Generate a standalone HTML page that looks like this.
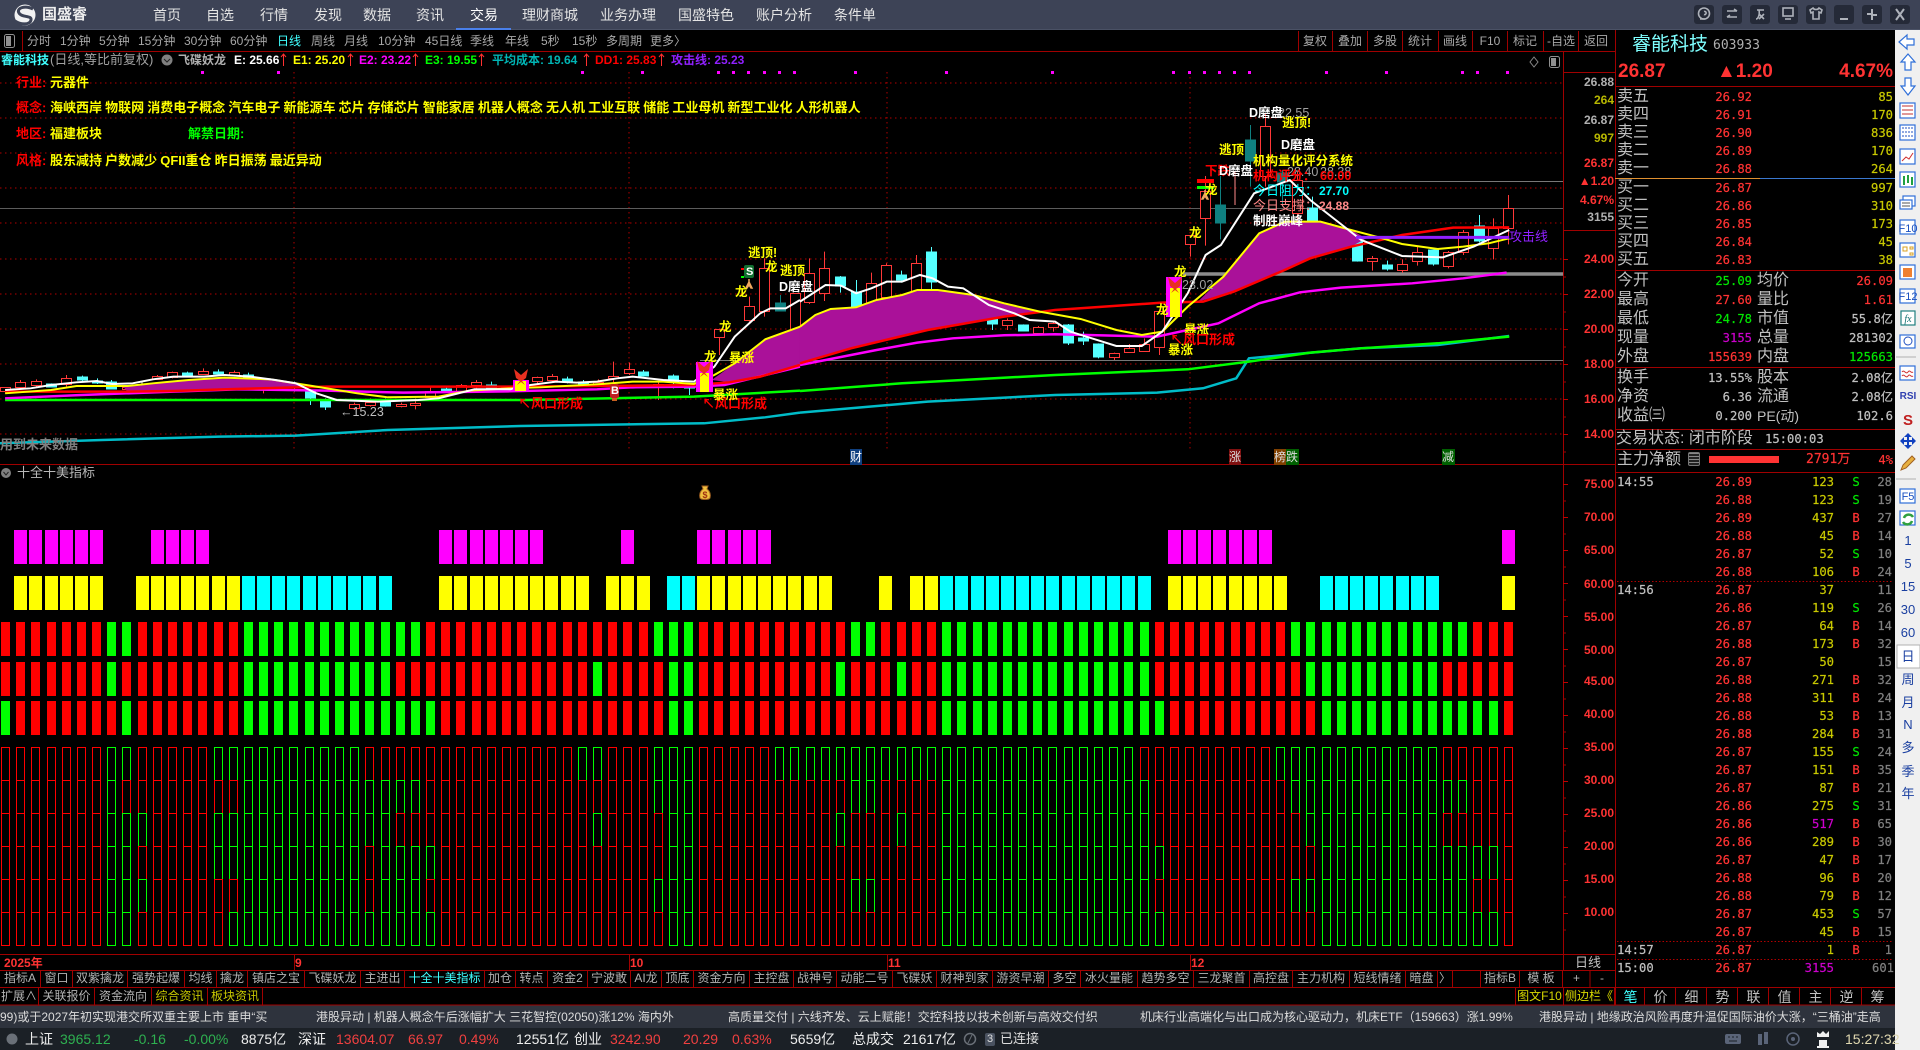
<!DOCTYPE html>
<html lang="zh"><head><meta charset="utf-8"><title>国盛睿</title>
<style>
*{box-sizing:border-box}
html,body{margin:0;padding:0;background:#000}
#r{position:relative;width:1920px;height:1050px;overflow:hidden;background:#000;font:12px/16px "Liberation Sans","Noto Sans CJK SC",sans-serif;color:#b4b4b4}
#r span{position:absolute;white-space:nowrap}
svg#m{position:absolute;left:0;top:0;width:1920px;height:1050px}
.bg{position:absolute}
.n{vector-effect:non-scaling-stroke;fill:none}
.mn{font-size:14px;color:#e4e4e4;top:7px}
.tb{top:33px;color:#a8a8a8}
.tr{top:33px;color:#a8a8a8;width:34px;text-align:center}
.k{font-weight:bold;font-size:12px;top:52px}
.y,.w,.d,.o{font-weight:bold;font-size:12.5px}
.y{color:#ff0}.w{color:#fff}.d{color:#f00}.o{color:#a0a0a0;font-weight:normal}
.c{font-size:13px;font-weight:bold;color:#ff0;word-spacing:-.5px}
.ax{right:306px;font-weight:bold;color:#ff3333;text-align:right}
.ag{right:306px;color:#b0b0b0;font-weight:bold;text-align:right}
.ay{right:306px;color:#b8b800;font-weight:bold;text-align:right}
.l{left:1617px;font-size:16px;line-height:18px;color:#c0c0c0}
.l2{left:1757px;font-size:16px;line-height:18px;color:#c0c0c0}
.p,.q{font:12.2px/18px "DejaVu Sans Mono","Noto Sans CJK SC",monospace;text-align:right;-webkit-text-stroke:.2px}
.p{right:168px}.q{right:27px}
.r{color:#ff3333}.g{color:#00e600}.v{color:#c8c800}.h{color:#c0c0c0}.u{color:#cc00cc}
.cell{height:18px;line-height:17px;text-align:center;border-right:1px solid #a00000;color:#b4b4b4}
.r1{top:970px}.r2{top:988px}
#tk{position:absolute;left:1617px;top:473px;border-collapse:collapse;table-layout:fixed;width:275px;font:12.2px/18px "DejaVu Sans Mono",monospace;-webkit-text-stroke:.2px}
#tk td{padding:0;height:18px;text-align:right;color:#ff3333}
#tk td:nth-child(1){text-align:left;color:#c0c0c0;width:83px}
#tk td:nth-child(2){width:52px}
#tk td:nth-child(3){width:82px;color:#c8c800;padding-right:0}
#tk td:nth-child(4){width:38px;text-align:center;padding-left:6px}
#tk td:nth-child(5){color:#808080}
#tk td.s{color:#00e600}
#tk td.pp{color:#cc00cc}
.tf{top:989px;width:31px;text-align:center;font-size:14px;color:#c0c0c0}
.tc{top:1009px;color:#dcdcdc;font-size:12px}
.s1{top:1031px;font-size:14px}
.sb{left:1896px;width:24px;text-align:center;color:#1a3fa0;font-size:13px}
</style></head><body><div id="r">
<div class="bg" style="left:0;top:0;width:1920px;height:30px;background:#3d4356;border-bottom:1px solid #4a5165"></div>
<div class="bg" style="left:456px;top:28px;width:55px;height:2px;background:#4a80ea"></div>
<div class="bg" style="left:1895px;top:30px;width:25px;height:1020px;background:#f0f0f0"></div>
<div class="bg" style="left:0;top:1005px;width:1895px;height:23px;background:#2e333d"></div>
<div class="bg" style="left:0;top:1028px;width:1895px;height:22px;background:#1b2026"></div>
<div class="bg" style="left:1709px;top:456px;width:70px;height:7px;background:#ff3333"></div>

<svg id="m" viewBox="0 0 1920 1050" xmlns="http://www.w3.org/2000/svg">
<g id="grid" stroke="#b00000" stroke-dasharray="1.5 3.5" fill="none">
<path d="M0 83H1563M0 118H1563M0 153H1563M0 188H1563M0 223H1563M0 259H1563M0 294H1563M0 329H1563M0 364H1563M0 399H1563M0 434H1563"/>
<path d="M294 72V450M629 72V450M887 72V450M1190 72V450"/>
</g>
<g stroke="#8c8c8c" fill="none">
<path d="M0 208.5H1563" stroke="#5c5c5c"/>
<path d="M1285 181.5H1563" stroke="#787878"/>
<path d="M700 360.5H1563" stroke="#787878"/>
<path d="M1183 274H1563" stroke-width="3.5"/>
</g>
<g id="c1"></g>
<!-- filled hump regions -->
<g fill="#aa1199">
<polygon transform="translate(0 180) scale(.5102 .3333)" points="240,618 300,610 370,600 440,593 530,598 630,622 460,627 340,633 250,635"/>
<polygon transform="translate(0 180) scale(.5102 .3333)" points="1395,600 1440,550 1500,478 1568,440 1568,555 1490,590 1430,607"/>
<polygon transform="translate(800 100) scale(.5102 .3333)" points="0,680 30,645 60,627 110,622 150,600 200,585 230,570 270,570 340,585 400,610 470,635 400,650 250,690 100,745 0,790"/>
<polygon transform="translate(800 100) scale(.5102 .3333)" points="780,605 830,530 900,400 950,365 1020,365 1080,390 1110,415 1080,440 1000,475 950,510 850,575"/>
</g>
<g id="c2"></g>
<g transform="translate(0 180) scale(.5102 .3333)">
<polyline class="n" stroke="#00bcc8" stroke-width="2.5" points="0,790 200,780 430,770 580,767 760,750 1020,738 1380,730 1500,712 1568,698"/>
<polyline class="n" stroke="#00ff00" stroke-width="2.5" points="10,660 640,660 1030,660 1360,650 1568,632"/>
<polyline class="n" stroke="#ff00ff" stroke-width="2.5" points="10,655 160,645 340,635 470,628 640,632 790,638 1000,634 1170,628 1240,622 1360,620 1420,615 1460,600 1568,560"/>
<polyline class="n" stroke="#ff0000" stroke-width="2.5" points="10,635 250,635 340,633 460,627 640,620 1000,620 1170,618 1360,615 1430,607 1490,590 1568,555"/>
<polyline class="n" stroke="#ffff00" stroke-width="2" points="10,640 100,630 150,618 250,618 300,610 370,600 440,593 530,598 620,620 700,640 760,652 860,650 920,632 1000,625 1060,622 1180,612 1240,605 1300,605 1360,612 1400,585 1440,550 1500,478 1568,440"/>
<polyline class="n" stroke="#ffffff" stroke-width="2" points="10,630 60,625 100,615 150,607 190,603 220,612 260,610 300,598 340,590 400,590 440,585 490,590 540,600 580,610 620,640 660,660 740,665 820,660 860,655 930,628 1000,628 1040,615 1090,605 1130,608 1170,605 1210,595 1240,590 1300,600 1360,605 1400,560 1440,470 1490,400 1510,385 1540,385 1568,360"/>
</g>
<g transform="translate(800 100) scale(.5102 .3333)">
<polyline class="n" stroke="#00bcc8" stroke-width="2.5" points="0,938 250,905 500,885 700,878 790,865 855,835 880,775 950,765 1100,745 1250,735 1390,708"/>
<polyline class="n" stroke="#00ff00" stroke-width="2.5" points="0,873 200,850 500,825 760,808 880,785 1000,758 1100,745 1250,730 1390,710"/>
<polyline class="n" stroke="#ff00ff" stroke-width="2.5" points="0,795 150,750 230,728 300,715 400,706 500,703 700,710 820,670 900,610 980,577 1060,563 1200,550 1300,535 1385,518"/>
<polyline class="n" stroke="#ff0000" stroke-width="2.5" points="0,790 100,745 250,690 400,650 500,630 710,608 790,605 850,575 950,510 1000,475 1080,440 1180,405 1280,383 1390,382"/>
<polyline class="n" stroke="#ffff00" stroke-width="2" points="0,680 30,645 60,627 110,622 150,600 200,585 230,570 270,570 340,585 400,610 470,635 550,657 620,690 670,705 710,695 760,620 830,530 900,400 950,365 1020,365 1080,390 1130,410 1180,432 1250,447 1300,440 1350,430 1390,415"/>
<polyline class="n" stroke="#ffffff" stroke-width="2" points="0,605 50,555 80,557 110,580 140,565 170,545 200,545 235,525 260,535 290,560 320,565 370,615 420,640 450,660 500,665 530,695 620,738 670,738 710,695 760,580 795,465 825,435 890,280 960,240 1000,300 1050,360 1100,420 1180,468 1260,472 1320,440 1390,390"/>
<path class="n" stroke="#9020ff" stroke-width="3" d="M1090 412H1390"/>
</g>
<g id="sp"></g>
<!-- frame lines -->
<g stroke="#a00000" fill="none">
<path d="M0 51.5H1615M22.5 31V51M1563.5 52V970M1615.5 30V1005M1563 72.5H1615M1563 230.5H1615"/>
<path d="M1298.5 31V51M1332.5 31V51M1367.5 31V51M1402.5 31V51M1438.5 31V51M1472.5 31V51M1507.5 31V51M1543.5 31V51M1578.5 31V51"/>
<path d="M0 464.5H1615M0 954.5H1615M0 970.5H1615M0 987.5H1895M0 1005H1895"/>
<path d="M1615 86.5H1895M1615 270.5H1895M1615 367.5H1895M1615 429.5H1895M1615 449.5H1895M1615 472.5H1895"/>
<path d="M1644.5 988V1005M1675.5 988V1005M1706.5 988V1005M1737.5 988V1005M1768.5 988V1005M1799.5 988V1005M1830.5 988V1005M1861.5 988V1005"/>
<path d="M1590 970V987"/>
<path d="M294.5 955V970M629.5 955V970M887.5 955V970M1190.5 955V970"/>
<path d="M1617 581.5H1893M1617 941.5H1893M1617 959.5H1893" stroke="#b00000" stroke-dasharray="1.5 2"/>
</g>
<path d="M1615 178.5H1760" stroke="#e09030"/><path d="M1760 178.5H1895" stroke="#3a78d0"/>
<g id="ticks" stroke="#a00000"></g>
<g id="bars"></g>
<!-- logo -->
<circle cx="25" cy="15" r="10.500" fill="#f2f2f2"/>
<path d="M33 9C25 5 16 8 19 13S32 15 31 20 21 25 15 21" fill="none" stroke="#3d4356" stroke-width="3"/>
<!-- top buttons -->
<g fill="#252a38"><rect x="1694" y="5" width="20" height="19" rx="3"/><rect x="1722" y="5" width="20" height="19" rx="3"/><rect x="1750" y="5" width="20" height="19" rx="3"/><rect x="1778" y="5" width="20" height="19" rx="3"/><rect x="1806" y="5" width="20" height="19" rx="3"/><rect x="1834" y="5" width="20" height="19" rx="3"/><rect x="1862" y="5" width="20" height="19" rx="3"/><rect x="1890" y="5" width="20" height="19" rx="3"/></g>
<g fill="none" stroke="#aeb2ba" stroke-width="1.600">
<circle cx="1704" cy="13.5" r="5.5"/><path d="M1704 11.5a1.6 1.6 0 1 1 0 3M1700 19h5"/>
<path d="M1727 11h10M1734 9l3 2M1737 17h-10M1730 15l-3 2"/>
<path d="M1757 10h7M1759 10c1 5-1 9-3 9M1759 14l5 5M1764 14l-5 5"/>
<rect x="1783" y="8" width="10" height="8"/><path d="M1785 19h6"/>
<path d="M1813 8l-3 2 1 3 2-1v7h6v-7l2 1 1-3-3-2c-1 2-5 2-6 0z"/>
<path d="M1840 19h8" stroke-width="2"/>
<path d="M1872 9v11M1867 14h5M1873 15h4" stroke-width="2"/>
<path d="M1896 9l8 11M1904 9l-8 11" stroke-width="2"/>
</g>
<!-- toolbar toggle icons -->
<rect x="4.5" y="34.5" width="10" height="13" rx="2" fill="none" stroke="#909090"/><rect x="6" y="36" width="5" height="10" fill="#909090"/>
<path d="M1534 57l4 5-4 5-4-5z" fill="none" stroke="#888"/>
<rect x="1549.5" y="56.5" width="10" height="11" rx="2" fill="none" stroke="#909090"/><rect x="1551" y="58" width="5" height="8" fill="#909090"/>
<circle cx="167" cy="60" r="5.5" fill="#808080"/><path d="M164 59l3 3 3-3" stroke="#222" fill="none"/>
<circle cx="6" cy="473" r="5" fill="#808080"/><path d="M3.5 472l2.5 3 2.5-3" stroke="#222" fill="none"/>
<!-- red arrows on info line -->
<g stroke="#ff3030" fill="none"><path d="M283.5 54V66M281 57l2.500-3 2.500 3M350.500 54V66M348 57l2.500-3 2.500 3M415.500 54V66M413 57l2.500-3 2.500 3M481.500 54V66M479 57l2.500-3 2.500 3M586.500 54V66M584 57l2.500-3 2.500 3M661.500 54V66M659 57l2.500-3 2.500 3"/></g>
<!-- magenta dots -->
<g fill="#f0f"><rect x="201" y="71" width="3" height="3"/><rect x="277" y="71" width="3" height="3"/><rect x="581" y="71" width="3" height="3"/><rect x="641" y="71" width="3" height="3"/><rect x="717" y="71" width="3" height="3"/><rect x="732" y="71" width="3" height="3"/><rect x="747" y="71" width="3" height="3"/><rect x="763" y="71" width="3" height="3"/><rect x="778" y="71" width="3" height="3"/><rect x="793" y="71" width="3" height="3"/><rect x="854" y="71" width="3" height="3"/><rect x="945" y="71" width="3" height="3"/><rect x="1051" y="71" width="3" height="3"/><rect x="1172" y="71" width="3" height="3"/><rect x="1188" y="71" width="3" height="3"/><rect x="1203" y="71" width="3" height="3"/><rect x="1218" y="71" width="3" height="3"/><rect x="1233" y="71" width="3" height="3"/><rect x="1248" y="71" width="3" height="3"/><rect x="1325" y="71" width="3" height="3"/><rect x="1385" y="71" width="3" height="3"/><rect x="1461" y="71" width="3" height="3"/><rect x="1476" y="71" width="3" height="3"/><rect x="1506" y="71" width="3" height="3"/></g>
<!-- small chart icons -->
<g id="fly">
<path d="M521 375l-7-6 2 9 4 3-3 4 4-3zM521 375l7-6-2 9-4 3 3 4-4-3z" fill="#e83020"/>
<path d="M704 367l-7-6 2 9 4 3-3 4 4-3zM704 367l7-6-2 9-4 3 3 4-4-3z" fill="#e83020"/>
<path d="M1175 283l-7-6 2 9 4 3-3 4 4-3zM1175 283l7-6-2 9-4 3 3 4-4-3z" fill="#e83020"/>
</g>
<rect x="610" y="384" width="9" height="14" rx="2" fill="#c02020"/><rect x="612" y="398" width="5" height="3" fill="#c86020"/>
<rect x="744" y="265" width="10" height="13" rx="2" fill="#107030"/><rect x="741" y="268" width="3" height="2" fill="#f00"/><rect x="741" y="276" width="3" height="2" fill="#0f0"/>
<path d="M749 279v3l-3 6h1l2-3 2 3h1l-3-6" stroke="#f0a860" fill="none" stroke-width="1.500"/>
<path d="M1205 190v3l-3 6h1l2-3 2 3h1l-3-6" stroke="#f0a860" fill="none" stroke-width="1.500"/>
<rect x="1197" y="179" width="17" height="4" fill="#f00"/><rect x="1197" y="186" width="17" height="3" fill="#0f0"/>
<g>
<path d="M702 486h6l-1 3c3 2 4 6 3 9-1 2-9 2-10 0-1-3 0-7 3-9z" fill="#f0c040" stroke="#a06020"/>
<text x="705" y="498" font-size="9" font-weight="bold" fill="#a03010" text-anchor="middle" font-family="Liberation Sans">$</text>
</g>
<!-- status icons -->
<circle cx="12" cy="1039" r="5.500" fill="#6a7078"/>
<circle cx="970" cy="1039" r="5.500" fill="none" stroke="#6a7078" stroke-width="1.500"/><path d="M968 1043l4-8" stroke="#6a7078"/>
<rect x="985" y="1033" width="10" height="13" rx="2" fill="#4a5260"/>
<rect x="1725" y="1034" width="16" height="10" rx="2" fill="#5a6478"/><path d="M1728 1037h2M1732 1037h2M1736 1037h2M1729 1041h8" stroke="#1b2026"/>
<path d="M1758 1034h4v11h-4zM1764 1032h4v12h-4z" fill="#5a6478"/>
<circle cx="1793" cy="1039" r="6" fill="none" stroke="#5a6478" stroke-width="1.500"/><circle cx="1793" cy="1039" r="2" fill="#5a6478"/>
<path d="M1817 1032l3 2 3-3 3 3 3-3v6h-12zM1819 1040h8v6h2v2h-12v-2h2z" fill="#f0f0f0"/>
<!-- sidebar icons -->
<g fill="#fff" stroke="#2f6fd8" stroke-width="1.200">
<path d="M1899 42l8-7v4h7v6h-7v4z"/><path d="M1908 54l7 8h-4v8h-6v-8h-4z"/><path d="M1905 78h6v8h4l-7 9-7-9h4z"/>
<rect x="1900" y="103" width="15" height="15"/><rect x="1900" y="125" width="15" height="15"/><rect x="1900" y="149" width="15" height="15"/><rect x="1900" y="172" width="15" height="15"/>
<rect x="1903" y="196" width="12" height="10"/><rect x="1900" y="200" width="12" height="9"/>
<rect x="1900" y="220" width="15" height="14"/><rect x="1900" y="243" width="15" height="14"/><rect x="1900" y="265" width="15" height="14"/><rect x="1900" y="289" width="15" height="14"/>
<rect x="1901" y="311" width="14" height="14" stroke="#208080"/>
<rect x="1900" y="335" width="15" height="13"/>
<rect x="1900" y="366" width="15" height="14"/>
<rect x="1900" y="489" width="15" height="14"/>
<rect x="1900" y="511" width="15" height="14"/>
</g>
<path d="M1896 357H1916M1896 479H1916" stroke="#b0b0b0"/>
<g stroke-width="1" fill="none">
<path d="M1902 106h11M1902 110h11M1902 114h11" stroke="#c03030"/>
<path d="M1902 128h11M1902 132h11M1902 136h11" stroke="#2050c0" stroke-dasharray="2 1"/>
<path d="M1902 161l4-4 3 2 4-6" stroke="#d03030"/>
<path d="M1904 176v9M1908 175v8M1912 177v8" stroke="#20a040" stroke-width="2"/>
<path d="M1902 203h8M1902 206h8" stroke="#555"/>
<path d="M1902 372c2-3 4 3 6 0s3 2 5 0M1902 376c2-3 4 3 6 0s3 2 5 0" stroke="#d03030"/>
<circle cx="1908" cy="341" r="4" stroke="#2050c0"/>
<path d="M1903 247h4v4h-4zM1910 253h3v2h-3zM1910 247h3v2h-3z" stroke="#d8a020"/>
</g>
<text x="1908" y="232" font-size="11" fill="#1a50c0" text-anchor="middle" font-family="Liberation Sans">F10</text>
<rect x="1903" y="268" width="9" height="9" fill="#f08030"/>
<text x="1908" y="300" font-size="11" fill="#1a50c0" text-anchor="middle" font-family="Liberation Sans">F12</text>
<text x="1908" y="322" font-size="10" fill="#107070" text-anchor="middle" font-style="italic" font-family="Liberation Serif">fx</text>
<text x="1908" y="399" font-size="10" font-weight="bold" fill="#3040b0" text-anchor="middle" font-family="Liberation Sans">RSI</text>
<text x="1908" y="425" font-size="15" font-weight="bold" fill="#c02020" text-anchor="middle" font-family="Liberation Sans">S</text>
<path d="M1908 433l4 4h-3v3h3v-3l4 4-4 4v-3h-3v3h3l-4 4-4-4h3v-3h-3v3l-4-4 4-4v3h3v-3h-3z" fill="#1040c0"/>
<path d="M1901 470l2-5 9-9 3 3-9 9z" fill="#e8b040" stroke="#a06020"/>
<text x="1908" y="500" font-size="11" fill="#1a50c0" text-anchor="middle" font-family="Liberation Sans">F5</text>
<path d="M1904 518a5 5 0 0 1 9-1M1912 521a5 5 0 0 1-9 1" stroke="#30a040" stroke-width="2.500" fill="none"/>
<rect x="1897" y="645" width="23" height="23" fill="#fff" stroke="#b0b0b0"/>
</svg>

<!-- top bar -->
<span style="left:42px;top:7px;font-size:15px;font-weight:bold;color:#eee">国盛睿</span>
<span class="mn" style="left:153px">首页</span><span class="mn" style="left:206px">自选</span><span class="mn" style="left:260px">行情</span><span class="mn" style="left:314px">发现</span><span class="mn" style="left:363px">数据</span><span class="mn" style="left:416px">资讯</span><span class="mn" style="left:470px;color:#fff">交易</span><span class="mn" style="left:522px">理财商城</span><span class="mn" style="left:600px">业务办理</span><span class="mn" style="left:678px">国盛特色</span><span class="mn" style="left:756px">账户分析</span><span class="mn" style="left:834px">条件单</span>

<!-- period bar -->
<span class="tb" style="left:27px">分时</span><span class="tb" style="left:60px">1分钟</span><span class="tb" style="left:99px">5分钟</span><span class="tb" style="left:138px">15分钟</span><span class="tb" style="left:184px">30分钟</span><span class="tb" style="left:230px">60分钟</span><span class="tb" style="left:277px;color:#40ffff">日线</span><span class="tb" style="left:311px">周线</span><span class="tb" style="left:344px">月线</span><span class="tb" style="left:378px">10分钟</span><span class="tb" style="left:425px">45日线</span><span class="tb" style="left:470px">季线</span><span class="tb" style="left:505px">年线</span><span class="tb" style="left:541px">5秒</span><span class="tb" style="left:572px">15秒</span><span class="tb" style="left:606px">多周期</span><span class="tb" style="left:650px">更多〉</span>
<span class="tr" style="left:1298px">复权</span><span class="tr" style="left:1333px">叠加</span><span class="tr" style="left:1368px">多股</span><span class="tr" style="left:1403px">统计</span><span class="tr" style="left:1438px">画线</span><span class="tr" style="left:1473px">F10</span><span class="tr" style="left:1508px">标记</span><span class="tr" style="left:1544px">-自选</span><span class="tr" style="left:1579px">返回</span>

<!-- info line -->
<span class="k" style="left:1px;color:#40ffff">睿能科技</span><span class="k" style="left:50px;color:#a0a0a0;font-weight:normal;font-size:13px">(日线,等比前复权)</span>
<span class="k" style="left:178px;color:#b0b0b0">飞碟妖龙</span><span class="k" style="left:234px;color:#fff">E: 25.66</span><span class="k" style="left:293px;color:#ff0">E1: 25.20</span><span class="k" style="left:359px;color:#f0f">E2: 23.22</span><span class="k" style="left:425px;color:#0f0">E3: 19.55</span><span class="k" style="left:492px;color:#00b4b4">平均成本: 19.64</span><span class="k" style="left:595px;color:#f00">DD1: 25.83</span><span class="k" style="left:671px;color:#9020ff">攻击线: 25.23</span>

<!-- concept block -->
<span class="c" style="left:16px;top:75px;color:#f00">行业:</span><span class="c" style="left:50px;top:75px">元器件</span>
<span class="c" style="left:16px;top:100px;color:#f00">概念:</span><span class="c" style="left:50px;top:100px">海峡西岸 物联网 消费电子概念 汽车电子 新能源车 芯片 存储芯片 智能家居 机器人概念 无人机 工业互联 储能 工业母机 新型工业化 人形机器人</span>
<span class="c" style="left:16px;top:126px;color:#f00">地区:</span><span class="c" style="left:50px;top:126px">福建板块</span><span class="c" style="left:188px;top:126px;color:#0f0">解禁日期:</span>
<span class="c" style="left:16px;top:153px;color:#f00">风格:</span><span class="c" style="left:50px;top:153px">股东减持 户数减少 QFII重仓 昨日振荡 最近异动</span>

<!-- chart annotations -->
<span class="o" style="left:1278px;top:105px">22.55</span><span class="w" style="left:1249px;top:105px">D磨盘</span>
<span class="y" style="left:1282px;top:115px">逃顶!</span><span class="w" style="left:1281px;top:137px">D磨盘</span><span class="y" style="left:1219px;top:142px">逃顶</span>
<span class="y" style="left:1253px;top:153px">机构量化评分系统</span>
<span class="d" style="left:1205px;top:163px">下跌</span><span class="w" style="left:1219px;top:163px">D磨盘</span>
<span class="o" style="left:1287px;top:164px">28.40</span><span class="o" style="left:1320px;top:164px">28.38</span>
<span class="d" style="left:1253px;top:168px">机构评分：</span><span class="d" style="left:1320px;top:168px">60.00</span>
<span style="left:1253px;top:183px;color:#0ff;font-size:13px">今日阻力：</span><span style="left:1319px;top:183px;color:#0ff;font-weight:bold">27.70</span>
<span style="left:1253px;top:198px;color:#ff8888;font-size:13px">今日支撑：</span><span style="left:1319px;top:198px;color:#ff8888;font-weight:bold">24.88</span>
<span class="w" style="left:1253px;top:213px">制胜巅峰</span>
<span class="y" style="left:1189px;top:225px">龙</span><span class="y" style="left:1205px;top:182px">龙</span><span class="y" style="left:1174px;top:264px">龙</span><span class="y" style="left:1156px;top:302px">龙</span>
<span class="o" style="left:1182px;top:277px">23.02</span>
<span class="y" style="left:1184px;top:322px">暴涨</span><span class="y" style="left:1168px;top:342px">暴涨</span><span class="d" style="left:1170px;top:332px;font-size:13px">↖风口形成</span>
<span class="d" style="left:518px;top:396px;font-size:13px">↖风口形成</span><span class="d" style="left:702px;top:396px;font-size:13px">↖风口形成</span>
<span class="o" style="left:340px;top:404px;color:#c0c0c0">←15.23</span>
<span style="left:0;top:437px;color:#808080;font-size:13px;font-weight:bold">用到未来数据</span>
<span class="y" style="left:729px;top:350px">暴涨</span><span class="y" style="left:713px;top:387px">暴涨</span><span class="y" style="left:704px;top:349px">龙</span><span class="y" style="left:719px;top:319px">龙</span><span class="y" style="left:735px;top:284px">龙</span>
<span class="y" style="left:748px;top:245px">逃顶!</span><span class="y" style="left:765px;top:259px">龙</span><span class="y" style="left:780px;top:263px">逃顶</span><span class="w" style="left:779px;top:279px">D磨盘</span>
<span style="left:746px;top:264px;color:#fff;font-size:11px;font-weight:bold">S</span><span style="left:611px;top:383px;color:#fff;font-size:11px;font-weight:bold">B</span>
<span style="left:1509px;top:229px;color:#9020ff;font-size:13px">攻击线</span>
<span style="left:850px;top:449px;background:#104080;color:#fff;width:12px;height:16px">财</span><span style="left:1229px;top:449px;background:#801010;color:#ddd;width:12px;height:16px">涨</span><span style="left:1274px;top:449px;background:#804000;color:#ddd;width:12px;height:16px">榜</span><span style="left:1286px;top:449px;background:#006000;color:#ddd;width:13px;height:16px">跌</span><span style="left:1442px;top:449px;background:#006000;color:#ddd;width:13px;height:16px">减</span>
<span style="left:17px;top:465px;font-size:13px;color:#b8b8b8">十全十美指标</span>

<!-- axis upper -->
<span class="ag" style="top:74px">26.88</span><span class="ay" style="top:92px">264</span><span class="ag" style="top:112px">26.87</span><span class="ay" style="top:130px">997</span><span class="ax" style="top:155px">26.87</span><span class="ax" style="top:173px">▲1.20</span><span class="ax" style="top:192px">4.67%</span><span class="ag" style="top:209px">3155</span>
<span class="ax" style="top:251px">24.00</span><span class="ax" style="top:286px">22.00</span><span class="ax" style="top:321px">20.00</span><span class="ax" style="top:356px">18.00</span><span class="ax" style="top:391px">16.00</span><span class="ax" style="top:426px">14.00</span>
<!-- axis lower -->
<span class="ax" style="top:476px">75.00</span><span class="ax" style="top:509px">70.00</span><span class="ax" style="top:542px">65.00</span><span class="ax" style="top:576px">60.00</span><span class="ax" style="top:609px">55.00</span><span class="ax" style="top:642px">50.00</span><span class="ax" style="top:673px">45.00</span><span class="ax" style="top:706px">40.00</span><span class="ax" style="top:739px">35.00</span><span class="ax" style="top:772px">30.00</span><span class="ax" style="top:805px">25.00</span><span class="ax" style="top:838px">20.00</span><span class="ax" style="top:871px">15.00</span><span class="ax" style="top:904px">10.00</span>

<!-- date axis -->
<span style="left:4px;top:955px;color:#ff3333;font-weight:bold">2025年</span><span style="left:295px;top:955px;color:#ff3333;font-weight:bold">9</span><span style="left:630px;top:955px;color:#ff3333;font-weight:bold">10</span><span style="left:888px;top:955px;color:#ff3333;font-weight:bold">11</span><span style="left:1191px;top:955px;color:#ff3333;font-weight:bold">12</span>
<span style="left:1575px;top:955px;color:#c0c0c0;font-size:13px">日线</span>

<!-- tabs -->
<span class="cell r1" style="left:0;width:41px">指标A</span><span class="cell r1" style="left:41px;width:32px">窗口</span><span class="cell r1" style="left:73px;width:55px">双紫擒龙</span><span class="cell r1" style="left:128px;width:57px">强势起爆</span><span class="cell r1" style="left:185px;width:32px">均线</span><span class="cell r1" style="left:217px;width:31px">擒龙</span><span class="cell r1" style="left:248px;width:57px">镇店之宝</span><span class="cell r1" style="left:305px;width:56px">飞碟妖龙</span><span class="cell r1" style="left:361px;width:44px">主进出</span><span class="cell r1" style="left:405px;width:80px;color:#40ffff">十全十美指标</span><span class="cell r1" style="left:485px;width:31px">加仓</span><span class="cell r1" style="left:516px;width:32px">转点</span><span class="cell r1" style="left:548px;width:40px">资金2</span><span class="cell r1" style="left:588px;width:43px">宁波敢</span><span class="cell r1" style="left:631px;width:31px">AI龙</span><span class="cell r1" style="left:662px;width:32px">顶底</span><span class="cell r1" style="left:694px;width:56px">资金方向</span><span class="cell r1" style="left:750px;width:44px">主控盘</span><span class="cell r1" style="left:794px;width:43px">战神号</span><span class="cell r1" style="left:837px;width:56px">动能二号</span><span class="cell r1" style="left:893px;width:44px">飞碟妖</span><span class="cell r1" style="left:937px;width:56px">财神到家</span><span class="cell r1" style="left:993px;width:56px">游资早潮</span><span class="cell r1" style="left:1049px;width:32px">多空</span><span class="cell r1" style="left:1081px;width:57px">冰火量能</span><span class="cell r1" style="left:1138px;width:56px">趋势多空</span><span class="cell r1" style="left:1194px;width:56px">三龙聚首</span><span class="cell r1" style="left:1250px;width:43px">高控盘</span><span class="cell r1" style="left:1293px;width:57px">主力机构</span><span class="cell r1" style="left:1350px;width:56px">短线情绪</span><span class="cell r1" style="left:1406px;width:32px">暗盘</span><span class="cell r1" style="left:1438px;width:15px">〉</span><span class="cell r1" style="left:1453px;width:28px"></span><span class="cell r1" style="left:1481px;width:39px">指标B</span><span class="cell r1" style="left:1520px;width:43px">模 板</span><span style="left:1573px;top:970px">+</span><span style="left:1600px;top:970px">-</span>
<span class="cell r2" style="left:0;width:39px">扩展∧</span><span class="cell r2" style="left:39px;width:56px">关联报价</span><span class="cell r2" style="left:95px;width:57px">资金流向</span><span class="cell r2" style="left:152px;width:56px;color:#c8c800">综合资讯</span><span class="cell r2" style="left:208px;width:55px;color:#c8c800">板块资讯</span>
<span class="cell r2" style="left:1515px;width:49px;color:#d8d800;border-left:1px solid #a00000">图文F10</span><span class="cell r2" style="left:1564px;width:51px;color:#d8d800">侧边栏《</span>
<span class="tf" style="left:1630px;color:#40ffff;margin-left:-15px">笔</span><span class="tf" style="left:1645px">价</span><span class="tf" style="left:1676px">细</span><span class="tf" style="left:1707px">势</span><span class="tf" style="left:1738px">联</span><span class="tf" style="left:1769px">值</span><span class="tf" style="left:1800px">主</span><span class="tf" style="left:1831px">逆</span><span class="tf" style="left:1862px">筹</span>

<!-- ticker -->
<span class="tc" style="left:0">99)或于2027年初实现港交所双重主要上市 重申“买</span>
<span class="tc" style="left:316px">港股异动 | 机器人概念午后涨幅扩大 三花智控(02050)涨12% 海内外</span>
<span class="tc" style="left:728px">高质量交付 | 六线齐发、云上赋能！交控科技以技术创新与高效交付织</span>
<span class="tc" style="left:1140px">机床行业高端化与出口成为核心驱动力，机床ETF（159663）涨1.99%</span>
<span class="tc" style="left:1539px;width:356px;overflow:hidden">港股异动 | 地缘政治风险再度升温促国际油价大涨，“三桶油”走高</span>

<!-- status -->
<span class="s1" style="left:25px;color:#eee">上证</span><span class="s1" style="left:60px;color:#2eb050">3965.12</span><span class="s1" style="left:134px;color:#2eb050">-0.16</span><span class="s1" style="left:184px;color:#2eb050">-0.00%</span><span class="s1" style="left:241px;color:#eee">8875亿</span>
<span class="s1" style="left:298px;color:#eee">深证</span><span class="s1" style="left:336px;color:#f04040">13604.07</span><span class="s1" style="left:408px;color:#f04040">66.97</span><span class="s1" style="left:459px;color:#f04040">0.49%</span><span class="s1" style="left:516px;color:#eee">12551亿</span>
<span class="s1" style="left:574px;color:#eee">创业</span><span class="s1" style="left:610px;color:#f04040">3242.90</span><span class="s1" style="left:683px;color:#f04040">20.29</span><span class="s1" style="left:732px;color:#f04040">0.63%</span><span class="s1" style="left:790px;color:#eee">5659亿</span>
<span class="s1" style="left:852px;color:#eee">总成交</span><span class="s1" style="left:903px;color:#eee">21617亿</span>
<span style="left:987px;top:1031px;color:#ddd;font-size:11px">3</span><span style="left:1000px;top:1031px;color:#ddd;font-size:13px">已连接</span>
<span class="s1" style="left:1845px;color:#e0d8b0;font-size:14px">15:27:32</span>

<!-- right panel header -->
<span style="left:1632px;top:32px;font-size:19px;line-height:26px;color:#7fffff">睿能科技</span><span style="left:1713px;top:37px;font:13px/18px 'DejaVu Sans Mono',monospace;color:#b0b0b0">603933</span>
<span class="r" style="left:1618px;top:61px;font-size:19px;font-weight:bold;line-height:22px">26.87</span><span class="r" style="left:1717px;top:61px;font-size:19px;font-weight:bold;line-height:22px">▲1.20</span><span class="r" style="right:27px;top:61px;font-size:19px;font-weight:bold;line-height:22px">4.67%</span>

<span class="l" style="top:88px">卖五</span><span class="p r" style="top:88px">26.92</span><span class="q v" style="top:88px">85</span>
<span class="l" style="top:106px">卖四</span><span class="p r" style="top:106px">26.91</span><span class="q v" style="top:106px">170</span>
<span class="l" style="top:124px">卖三</span><span class="p r" style="top:124px">26.90</span><span class="q v" style="top:124px">836</span>
<span class="l" style="top:142px">卖二</span><span class="p r" style="top:142px">26.89</span><span class="q v" style="top:142px">170</span>
<span class="l" style="top:160px">卖一</span><span class="p r" style="top:160px">26.88</span><span class="q v" style="top:160px">264</span>
<span class="l" style="top:179px">买一</span><span class="p r" style="top:179px">26.87</span><span class="q v" style="top:179px">997</span>
<span class="l" style="top:197px">买二</span><span class="p r" style="top:197px">26.86</span><span class="q v" style="top:197px">310</span>
<span class="l" style="top:215px">买三</span><span class="p r" style="top:215px">26.85</span><span class="q v" style="top:215px">173</span>
<span class="l" style="top:233px">买四</span><span class="p r" style="top:233px">26.84</span><span class="q v" style="top:233px">45</span>
<span class="l" style="top:251px">买五</span><span class="p r" style="top:251px">26.83</span><span class="q v" style="top:251px">38</span>

<span class="l" style="top:272px">今开</span><span class="p g" style="top:272px">25.09</span><span class="l2" style="top:272px">均价</span><span class="q r" style="top:272px">26.09</span>
<span class="l" style="top:291px">最高</span><span class="p r" style="top:291px">27.60</span><span class="l2" style="top:291px">量比</span><span class="q r" style="top:291px">1.61</span>
<span class="l" style="top:310px">最低</span><span class="p g" style="top:310px">24.78</span><span class="l2" style="top:310px">市值</span><span class="q h" style="top:310px">55.8亿</span>
<span class="l" style="top:329px">现量</span><span class="p u" style="top:329px">3155</span><span class="l2" style="top:329px">总量</span><span class="q h" style="top:329px">281302</span>
<span class="l" style="top:348px">外盘</span><span class="p r" style="top:348px">155639</span><span class="l2" style="top:348px">内盘</span><span class="q g" style="top:348px">125663</span>
<span class="l" style="top:369px">换手</span><span class="p h" style="top:369px">13.55%</span><span class="l2" style="top:369px">股本</span><span class="q h" style="top:369px">2.08亿</span>
<span class="l" style="top:388px">净资</span><span class="p h" style="top:388px">6.36</span><span class="l2" style="top:388px">流通</span><span class="q h" style="top:388px">2.08亿</span>
<span class="l" style="top:407px">收益㈢</span><span class="p h" style="top:407px">0.200</span><span class="l2" style="top:407px;font-size:14px">PE(动)</span><span class="q h" style="top:407px">102.6</span>
<span class="l" style="top:430px;left:1616px">交易状态: 闭市阶段</span><span class="p h" style="top:430px;left:1765px;right:auto;text-align:left">15:00:03</span>
<span class="l" style="top:451px">主力净额</span><span style="left:1688px;top:452px;width:12px;height:14px;border:1px solid #777;border-radius:2px;background:repeating-linear-gradient(#888 0 1px,#222 1px 3px)"></span>
<span class="p r" style="top:451px;left:1806px;right:auto;font-size:13px">2791万</span><span class="q r" style="top:451px">4%</span>

<table id="tk"><tbody>
<tr><td>14:55<td>26.89<td>123<td class="s">S<td>28
<tr><td><td>26.88<td>123<td class="s">S<td>19
<tr><td><td>26.89<td>437<td>B<td>27
<tr><td><td>26.88<td>45<td>B<td>14
<tr><td><td>26.87<td>52<td class="s">S<td>10
<tr><td><td>26.88<td>106<td>B<td>24
<tr><td>14:56<td>26.87<td>37<td><td>11
<tr><td><td>26.86<td>119<td class="s">S<td>26
<tr><td><td>26.87<td>64<td>B<td>14
<tr><td><td>26.88<td>173<td>B<td>32
<tr><td><td>26.87<td>50<td><td>15
<tr><td><td>26.88<td>271<td>B<td>32
<tr><td><td>26.88<td>311<td>B<td>24
<tr><td><td>26.88<td>53<td>B<td>13
<tr><td><td>26.88<td>284<td>B<td>31
<tr><td><td>26.87<td>155<td class="s">S<td>24
<tr><td><td>26.87<td>151<td>B<td>35
<tr><td><td>26.87<td>87<td>B<td>21
<tr><td><td>26.86<td>275<td class="s">S<td>31
<tr><td><td>26.86<td class="pp">517<td>B<td>65
<tr><td><td>26.86<td>289<td>B<td>30
<tr><td><td>26.87<td>47<td>B<td>17
<tr><td><td>26.88<td>96<td>B<td>20
<tr><td><td>26.88<td>79<td>B<td>12
<tr><td><td>26.87<td>453<td class="s">S<td>57
<tr><td><td>26.87<td>45<td>B<td>15
<tr><td>14:57<td>26.87<td>1<td>B<td>1
<tr><td>15:00<td>26.87<td class="pp">3155<td><td>601
</tbody></table>

<!-- sidebar text -->
<span class="sb" style="top:533px">1</span><span class="sb" style="top:556px">5</span><span class="sb" style="top:579px">15</span><span class="sb" style="top:602px">30</span><span class="sb" style="top:625px">60</span><span class="sb" style="top:649px">日</span><span class="sb" style="top:672px">周</span><span class="sb" style="top:695px">月</span><span class="sb" style="top:717px">N</span><span class="sb" style="top:740px">多</span><span class="sb" style="top:764px">季</span><span class="sb" style="top:786px">年</span>

<script>
(function(){
var NS='http://www.w3.org/2000/svg';
function rect(p,x,y,w,h,f,s){var e=document.createElementNS(NS,'rect');e.setAttribute('x',x);e.setAttribute('y',y);e.setAttribute('width',w);e.setAttribute('height',h);e.setAttribute('fill',f);if(s)e.setAttribute('stroke',s);p.appendChild(e);return e}
function line(p,x1,y1,x2,y2,s){var e=document.createElementNS(NS,'line');e.setAttribute('x1',x1);e.setAttribute('y1',y1);e.setAttribute('x2',x2);e.setAttribute('y2',y2);e.setAttribute('stroke',s);p.appendChild(e)}
function exp(s){var o=[],re=/([RG])(\d+)/g,m;while(m=re.exec(s)){for(var i=0;i<+m[2];i++)o.push(m[1])}return o}
var X=function(i){return Math.round(1+i*15.18)};
var b=document.getElementById('bars');
var R='#ff0000',G='#00ff00';
var set=function(arr,f){arr.forEach(function(i){var ii=i;rect(b,X(ii)-2,f[0],13,34,f[1])})};
function range(a,c){var o=[];for(var i=a;i<=c;i++)o.push(i);return o}
var mag=[].concat(range(1,6),range(10,13),range(29,35),[41],range(46,50),range(77,83),[99]);
set(mag,[530,'#ff00ff']);
var yel=[].concat(range(1,6),range(9,15),range(29,38),[40,41,42],range(46,54),[58,60,61],range(77,84),[99]);
set(yel,[576,'#ffff00']);
var cya=[].concat(range(16,25),[44,45],range(62,75),range(87,94));
set(cya,[576,'#00ffff']);
var s1=exp('R7G2R7G12R15G3R7R3G2R4G14R9G12R3'),
    s2=exp('R7G1R8G10R13G1R4G2R7R2G1R3G1R2G14R10G9R5'),
    s3=exp('G1R7G1R7G13R15G2R7R9G15R10G12R1');
[[622,s1],[662,s2],[701,s3]].forEach(function(r){r[1].forEach(function(c,i){rect(b,X(i),r[0],9,34,c=='R'?R:G)})});
var A=exp('R7G2R5G10R14G2R3G3R5G2G22R9G11R5');
var first={
 B:'RRRRRRRGRRRRRRRRGGGGGGGGGG',
 C:'RRRRRRRGGGRRRRGGGGGGGGGGGG',
 D:'RRRRRRRGGRRRRRGGGGGGGGGGRG',
 E:'RRRRRRRGGGRRRRRRGGGGGGGGRG',
 F:'RRRRRRRGGRRRRRRGGGGGGGGGGG'};
var rows=[A];
[['B',s1],['C',s2],['D',s3],['E',s1],['F',s3]].forEach(function(p){var a=[];for(var i=0;i<100;i++)a.push(i<26?first[p[0]][i]:p[1][i]);rows.push(a)});
rows.forEach(function(r,k){r.forEach(function(c,i){rect(b,X(i)+.5,747.5+33*k,8,33,'none',c=='R'?R:G)})});
// candles: x,top,bottom,wickTop,wickBot,type
var c4=[[10,622,632,622,640,'u'],[40,607,622,600,625,'u'],[70,604,614,598,620,'u'],[100,610,620,610,620,'d'],[130,595,612,585,620,'u'],[160,587,600,587,607,'d'],[190,601,608,595,612,'d'],[218,602,626,600,628,'d'],[248,620,628,615,630,'u'],[307,587,598,585,600,'u'],[337,575,590,575,595,'u'],[367,576,587,575,590,'d'],[398,572,582,565,585,'u'],[428,573,582,568,585,'d'],[458,577,585,572,590,'u'],[487,582,608,578,610,'d'],[516,600,610,595,640,'u'],[547,605,622,600,625,'d'],[576,610,620,605,635,'d'],[607,632,655,628,675,'d'],[637,660,682,655,690,'d'],[694,672,683,668,690,'u'],[725,666,675,655,680,'u'],[755,660,678,655,680,'d'],[786,672,678,668,682,'u'],[813,670,675,655,688,'u'],[843,632,650,622,650,'u'],[875,625,637,620,638,'d'],[904,615,632,612,635,'u'],[933,606,616,600,625,'u'],[963,612,625,605,625,'d'],[992,622,628,620,630,'u'],[1052,592,602,590,610,'u'],[1082,587,600,582,605,'u'],[1112,594,605,590,610,'d'],[1142,604,612,600,615,'d'],[1172,605,614,598,615,'u'],[1202,587,595,545,620,'u'],[1232,568,580,548,585,'u'],[1261,572,588,570,590,'d'],[1290,612,618,605,660,'u'],[1320,585,605,583,625,'d'],[1350,620,625,615,645,'d'],[1409,446,470,446,525,'u'],[1468,378,420,350,425,'u'],[1497,265,393,235,410,'u'],[1529,367,392,345,392,'t'],[1558,340,450,340,450,'u']];
var c5=[[18,520,607,475,612,'u'],[48,503,580,455,603,'u'],[78,528,558,528,578,'d'],[110,572,630,540,632,'d'],[139,548,618,518,655,'u'],[168,496,592,490,628,'u'],[198,522,540,512,548,'d'],[227,488,590,465,592,'u'],[257,453,545,441,568,'d'],[288,582,605,578,610,'d'],[318,582,607,578,620,'u'],[348,590,640,590,648,'d'],[377,645,672,645,690,'d'],[405,660,675,655,690,'u'],[438,673,692,673,692,'d'],[467,680,698,678,700,'u'],[496,668,682,665,695,'u'],[526,672,728,672,735,'d'],[555,710,722,695,735,'d'],[585,730,770,730,775,'d'],[615,758,770,758,780,'u'],[645,743,755,732,758,'u'],[674,732,752,715,752,'u'],[704,633,742,633,765,'u'],[765,405,432,405,470,'u'],[794,272,355,228,437,'u'],[824,313,370,228,418,'t'],[882,118,182,75,260,'t'],[912,78,228,40,260,'u'],[944,215,245,210,320,'t'],[974,240,340,215,365,'u'],[1003,320,403,290,405,'d'],[1031,395,425,370,437,'u'],[1060,417,432,393,436,'u'],[1092,418,482,418,485,'d'],[1121,475,482,468,512,'u'],[1151,493,508,482,512,'d'],[1180,493,510,478,518,'u'],[1210,455,482,438,497,'u'],[1241,448,492,448,497,'d'],[1270,455,498,453,505,'u'],[1299,395,455,390,465,'u'],[1330,375,423,345,427,'d'],[1358,385,445,355,478,'u'],[1387,323,385,285,433,'u']];
function candle(p,d,ox,oy){var x=Math.round(d[0]/1.96+ox)+.5,t=Math.round(d[1]/3+oy)+.5,bo=Math.round(d[2]/3+oy)+.5,wt=d[3]/3+oy,wb=d[4]/3+oy,k=d[5];
 var col=k=='u'?'#ff3838':k=='d'?'#55ffff':'#0f8080';
 line(p,x,wt,x,wb,col);
 if(k=='u'){rect(p,x-5,t,10,bo-t,'#000',col)}else{rect(p,x-5.500,t,11,bo-t,col)}}
var g=document.getElementById('c1');
c4.forEach(function(d){candle(g,d,0,180)});
c5.forEach(function(d){candle(g,d,800,100)});
line(g,142,381,142,390,'#ddd');line(g,138,385,147,385,'#ddd');
line(g,1235,172,1235,205,'#ff8a8a');
// specials
var sp=document.getElementById('sp');
[[513,380,16,12,515,381,11,10],[696,362,17,30,700,373,9,19],[1166,277,16,40,1170,288,10,29]].forEach(function(a){rect(sp,a[0],a[1],a[2],a[3],'#ff00ff');rect(sp,a[4],a[5],a[6],a[7],'#ffff00')});
// ticks
var t=document.getElementById('ticks');
for(var y=259;y<=434;y+=35){line(t,1563,y+.5,1568,y+.5,'#c00000');line(t,1563,y+18,1566,y+18,'#a00000')}
for(var i=0;i<14;i++){var yy=484+i*33;line(t,1563,yy+.5,1568,yy+.5,'#c00000');line(t,1563,yy+17,1566,yy+17,'#a00000')}
})();
</script>
</div></body></html>
